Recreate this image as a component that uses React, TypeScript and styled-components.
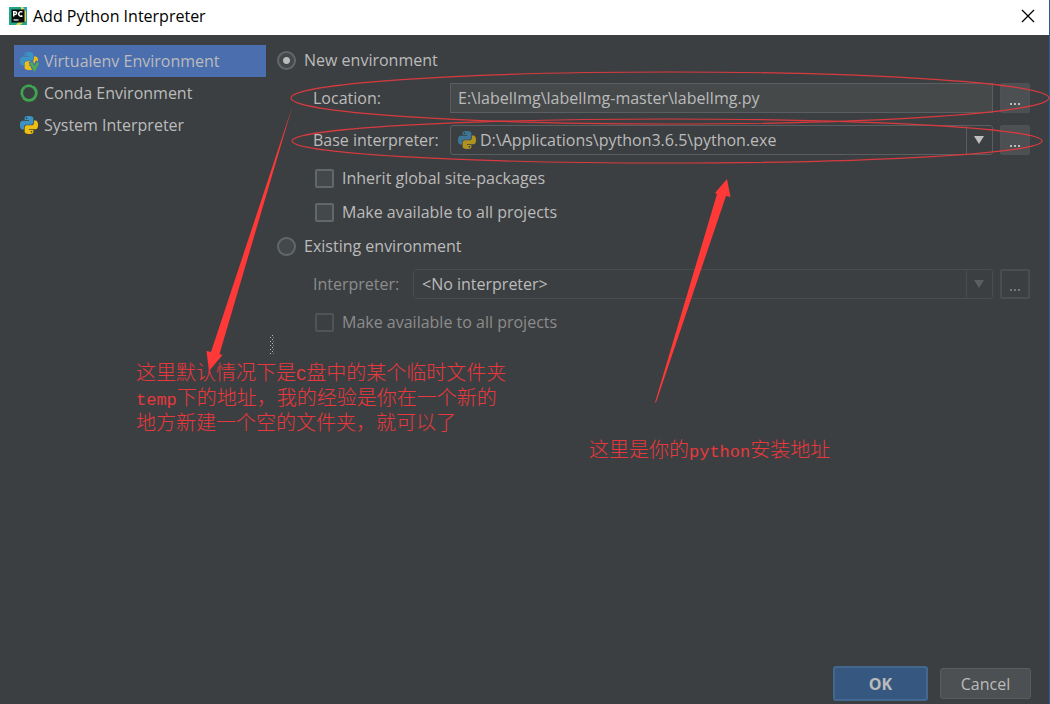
import React from "react";
import styled, { createGlobalStyle } from "styled-components";

const GlobalStyle = createGlobalStyle`
  * { box-sizing: border-box; }
  body { margin: 0; background: #3c3f41; }
`;

const uiFont = `"Open Sans", "Noto Sans", "Noto Sans CJK SC", sans-serif`;

const Dialog = styled.div`
  position: relative;
  display: flex;
  flex-direction: column;
  min-height: 100vh;
  background: #3c3f41;
  border-right: 1px solid #23608f;
  color: #bbbbbb;
  font-family: ${uiFont};
  font-size: 16px;
  line-height: 20px;
`;

const TitleBar = styled.header`
  display: flex;
  align-items: center;
  gap: 6px;
  height: 35px;
  padding: 0 14px 3px 9px;
  background: #ffffff;
  color: #000000;
`;

const Title = styled.h1`
  flex: 1;
  margin: 0;
  font-size: 16px;
  font-weight: 400;
`;

const CloseButton = styled.button`
  display: flex;
  padding: 0;
  border: 0;
  background: none;
  color: #000000;
`;

const Body = styled.div`
  display: flex;
  flex: 1;
`;

const Sidebar = styled.nav`
  width: 266px;
  padding: 10px 0 0 14px;
`;

const EnvLink = styled.a<{ $selected?: boolean }>`
  display: flex;
  align-items: center;
  gap: 6px;
  height: 32px;
  padding: 0 6px;
  background: ${(p) => (p.$selected ? "#4b6eaf" : "transparent")};
  color: #bbbbbb;
  text-decoration: none;
`;

const Splitter = styled.div`
  display: flex;
  align-items: center;
  justify-content: center;
  width: 11px;
  padding-bottom: 12px;
`;

const Main = styled.main`
  display: flex;
  flex: 1;
  flex-direction: column;
  min-width: 0;
  padding: 10px 19px 0 0;
`;

const Group = styled.fieldset`
  display: flex;
  flex-direction: column;
  min-width: 0;
  margin: 0 0 4px;
  padding: 0;
  border: 0;
`;

const Choice = styled.label<{ $inset?: boolean; $disabled?: boolean; $gap?: number }>`
  display: flex;
  align-items: center;
  align-self: flex-start;
  gap: 8px;
  height: 30px;
  margin-top: ${(p) => p.$gap ?? 0}px;
  padding-left: ${(p) => (p.$inset ? 38 : 0)}px;
  color: ${(p) => (p.$disabled ? "#8c8c8c" : "#bbbbbb")};
`;

const Radio = styled.input`
  appearance: none;
  width: 19px;
  height: 19px;
  margin: 0;
  border: 2px solid #63676a;
  border-radius: 50%;
  background: #43484a;
  &:checked {
    background: radial-gradient(circle, #bbbbbb 3px, #43484a 4px);
  }
`;

const Checkbox = styled.input`
  appearance: none;
  width: 19px;
  height: 19px;
  margin: 0;
  border: 2px solid #63676a;
  border-radius: 2px;
  background: #43484a;
  &:disabled {
    border-color: #515456;
    background: #3c3f41;
  }
`;

const FieldRow = styled.div<{ $gap: number }>`
  display: flex;
  align-items: center;
  height: 30px;
  margin-top: ${(p) => p.$gap}px;
  padding-left: 36px;
`;

const FieldLabel = styled.label<{ $width: number; $disabled?: boolean }>`
  width: ${(p) => p.$width}px;
  color: ${(p) => (p.$disabled ? "#8c8c8c" : "#bbbbbb")};
`;

const TextInput = styled.input`
  flex: 1;
  min-width: 0;
  height: 30px;
  padding: 0 7px;
  border: 1px solid #5b5e60;
  background: #45494a;
  color: #bbbbbb;
  font: inherit;
`;

const SelectBox = styled.div<{ $disabled?: boolean }>`
  display: grid;
  flex: 1;
  grid-template-columns: 30px 1fr 26px;
  align-items: center;
  min-width: 0;
  height: 30px;
  border: 1px solid ${(p) => (p.$disabled ? "#4a4d4f" : "#5b5e60")};
  border-radius: 3px;
  & > * { grid-row: 1; }
`;

const Select = styled.select<{ $icon?: boolean }>`
  appearance: none;
  grid-column: 1 / 4;
  height: 28px;
  padding: 0 30px 0 ${(p) => (p.$icon ? 29 : 8)}px;
  border: 0;
  background: transparent;
  color: #bbbbbb;
  font: inherit;
  opacity: 1;
`;

const SelectIcon = styled.span`
  display: flex;
  grid-column: 1;
  padding-left: 7px;
  opacity: 0.65;
  pointer-events: none;
`;

const ArrowCell = styled.span<{ $disabled?: boolean }>`
  display: flex;
  grid-column: 3;
  align-items: center;
  justify-content: center;
  height: 28px;
  padding-right: 2px;
  border-left: 1px solid ${(p) => (p.$disabled ? "#4a4d4f" : "#5b5e60")};
  color: ${(p) => (p.$disabled ? "#5c5f61" : "#bfbfbf")};
  pointer-events: none;
`;

const BrowseButton = styled.button`
  display: flex;
  align-items: flex-end;
  justify-content: center;
  width: 30px;
  height: 30px;
  margin-left: 7px;
  padding: 0 0 3px;
  border: 1px solid #4f5254;
  border-radius: 2px;
  background: #4c5052;
  color: #bbbbbb;
  font: inherit;
  &:disabled {
    border: 2px solid #4a4d4f;
    background: #3c3f41;
    color: #777777;
    padding-bottom: 2px;
  }
`;

const Footer = styled.footer`
  display: flex;
  align-items: center;
  justify-content: flex-end;
  gap: 12px;
  padding: 0 18px 3px;
`;

const FooterButton = styled.button<{ $primary?: boolean }>`
  width: ${(p) => (p.$primary ? 95 : 91)}px;
  height: ${(p) => (p.$primary ? 35 : 31)}px;
  padding: 0;
  border: ${(p) => (p.$primary ? "2px solid #43688f" : "1px solid #5a5d5f")};
  border-radius: 3px;
  background: ${(p) => (p.$primary ? "#365880" : "#4c5052")};
  color: #bbbbbb;
  font: inherit;
  font-weight: ${(p) => (p.$primary ? 700 : 400)};
`;

const Markup = styled.svg`
  position: absolute;
  top: 0;
  left: 0;
  pointer-events: none;
`;

const Note = styled.p<{ $x: number; $y: number }>`
  position: absolute;
  top: ${(p) => p.$y}px;
  left: ${(p) => p.$x}px;
  margin: 0;
  color: #e8383d;
  font-family: "Liberation Mono", "Noto Sans CJK SC", monospace;
  font-size: 20px;
  font-weight: 300;
  line-height: 25px;
  white-space: nowrap;
`;

const Latin = styled.span`
  font-size: 17px;
  line-height: 1;
`;

const SNAKE =
  "M14.25.18l.9.2.73.26.59.3.45.32.34.34.25.34.16.33.1.3.04.26.02.2-.01.13V8.5l-.05.63-.13.55-.21.46-.26.38-.3.31-.33.25-.35.19-.35.14-.33.1-.3.07-.26.04-.21.02H8.77l-.69.05-.59.14-.5.22-.41.27-.33.32-.27.35-.2.36-.15.37-.1.35-.07.32-.04.27-.02.21v3.06H3.17l-.21-.03-.28-.07-.32-.12-.35-.18-.36-.26-.36-.36-.35-.46-.32-.59-.28-.73-.21-.88-.14-1.05-.05-1.23.06-1.22.16-1.04.24-.87.32-.71.36-.57.4-.44.42-.33.42-.24.4-.16.36-.1.32-.05.24-.01h.16l.06.01h8.16v-.83H6.18l-.01-2.75-.02-.37.05-.34.11-.31.17-.28.25-.26.31-.23.38-.2.44-.18.51-.15.58-.12.64-.1.71-.06.77-.04.84-.02 1.27.05zm-6.3 1.98l-.23.33-.08.41.08.41.23.34.33.22.41.09.41-.09.33-.22.23-.34.08-.41-.08-.41-.23-.33-.33-.22-.41-.09-.41.09z";

const PythonIcon = ({ venv }: { venv?: boolean }) => (
  <svg width="18" height="18" viewBox="0 0 24 24" overflow="visible" aria-hidden="true">
    <path d={SNAKE} fill="#3c93c2" />
    <path d={SNAKE} fill="#efbf10" transform="rotate(180 12 12)" />
    {venv && (
      <path d="M14 12.500l5 9.500 5-9.500" fill="none" stroke="#4b6eaf" strokeWidth="6" />
    )}
    {venv && (
      <path d="M14.500 14l5 9 4.500-9" fill="none" stroke="#4dae50" strokeWidth="3.500" />
    )}
  </svg>
);

const CondaIcon = () => (
  <svg width="18" height="18" viewBox="0 0 18 18" aria-hidden="true">
    <circle cx="9" cy="9" r="7.300" fill="none" stroke="#3fa650" strokeWidth="2.800" />
    <path d="M2 14A8.500 8.500 0 0 1 14 2" fill="none" stroke="#3c3f41" strokeWidth="1.600" strokeDasharray="1 1.600" />
    <path d="M5 3.500l1.500 1M3.500 6l1.500.500" stroke="#3c3f41" strokeWidth="0.800" />
  </svg>
);

const PyCharmIcon = () => (
  <svg width="18" height="18" viewBox="0 0 18 18" aria-hidden="true">
    <rect width="18" height="18" fill="#21a98d" />
    <path d="M12 0h3l2 3v11l-6 4H7l5-6z" fill="#d9dd5a" />
    <path d="M0 3l4-3h8L5 18H0z" fill="#24a386" />
    <path d="M14 0h4v6z" fill="#2b9fc4" />
    <rect x="2.500" y="2.500" width="13" height="13" fill="#0b0b0b" />
    <path d="M4.700 9.500V4.700h1.500a1.400 1.400 0 0 1 0 2.800H4.700M13.400 5.300a2.200 2.200 0 1 0 0 3.300" fill="none" stroke="#ffffff" strokeWidth="1.400" />
    <path d="M4.500 13h5" stroke="#ffffff" strokeWidth="1.200" />
  </svg>
);

const DownArrow = () => (
  <svg width="10" height="8" viewBox="0 0 10 8" aria-hidden="true">
    <path d="M0 0h10L5 8z" fill="currentColor" />
  </svg>
);

const Grip = () => (
  <svg width="6" height="20" viewBox="0 0 6 20" aria-hidden="true">
    {[0, 4, 8, 12, 16].map((y) => (
      <g key={y} fill="#b5b5b5">
        <rect x="3" y={y} width="1" height="1" />
        <rect x="1" y={y + 2} width="1" height="1" />
        <rect x="4" y={y + 2} width="1" height="1" fill="#77797a" />
      </g>
    ))}
  </svg>
);

const Ellipsis = () => (
  <svg width="12" height="8" viewBox="0 0 12 8" aria-hidden="true">
    <path d="M1 2h2v2H1zM5 2h2v2H5zM9 2h2v2H9z" fill="currentColor" />
  </svg>
);

export default function App() {
  return (
    <Dialog role="dialog" aria-labelledby="dialog-title">
      <GlobalStyle />
      <TitleBar>
        <PyCharmIcon />
        <Title id="dialog-title">Add Python Interpreter</Title>
        <CloseButton aria-label="Close">
          <svg width="14" height="14" viewBox="0 0 14 14" aria-hidden="true">
            <path d="M1 1l12 12M13 1L1 13" stroke="currentColor" strokeWidth="1.300" />
          </svg>
        </CloseButton>
      </TitleBar>

      <Body>
        <Sidebar>
          <EnvLink href="#virtualenv" $selected>
            <PythonIcon venv />
            Virtualenv Environment
          </EnvLink>
          <EnvLink href="#conda">
            <CondaIcon />
            Conda Environment
          </EnvLink>
          <EnvLink href="#system">
            <PythonIcon />
            System Interpreter
          </EnvLink>
        </Sidebar>

        <Splitter>
          <Grip />
        </Splitter>

        <Main>
          <Group>
            <Choice>
              <Radio type="radio" name="mode" defaultChecked />
              New environment
            </Choice>
            <FieldRow $gap={8}>
              <FieldLabel $width={137} htmlFor="location">Location:</FieldLabel>
              <TextInput id="location" defaultValue="E:\labelImg\labelImg-master\labelImg.py" />
              <BrowseButton aria-label="Browse location"><Ellipsis /></BrowseButton>
            </FieldRow>
            <FieldRow $gap={12}>
              <FieldLabel $width={137} htmlFor="base">Base interpreter:</FieldLabel>
              <SelectBox>
                <Select id="base" $icon>
                  <option>D:\Applications\python3.6.5\python.exe</option>
                </Select>
                <SelectIcon><PythonIcon /></SelectIcon>
                <ArrowCell><DownArrow /></ArrowCell>
              </SelectBox>
              <BrowseButton aria-label="Browse base interpreter"><Ellipsis /></BrowseButton>
            </FieldRow>
            <Choice $inset $gap={8}>
              <Checkbox type="checkbox" />
              Inherit global site-packages
            </Choice>
            <Choice $inset $gap={4}>
              <Checkbox type="checkbox" />
              Make available to all projects
            </Choice>
          </Group>
          <Group>
            <Choice>
              <Radio type="radio" name="mode" />
              Existing environment
            </Choice>
            <FieldRow $gap={8}>
              <FieldLabel $width={100} $disabled htmlFor="existing">Interpreter:</FieldLabel>
              <SelectBox $disabled>
                <Select id="existing" disabled>
                  <option>&lt;No interpreter&gt;</option>
                </Select>
                <ArrowCell $disabled><DownArrow /></ArrowCell>
              </SelectBox>
              <BrowseButton disabled aria-label="Browse interpreter"><Ellipsis /></BrowseButton>
            </FieldRow>
            <Choice $inset $disabled $gap={8}>
              <Checkbox type="checkbox" disabled />
              Make available to all projects
            </Choice>
          </Group>
        </Main>
      </Body>

      <Footer>
        <FooterButton $primary>OK</FooterButton>
        <FooterButton>Cancel</FooterButton>
      </Footer>

      <Markup width="1050" height="480" viewBox="0 0 1050 480" aria-hidden="true">
        <g fill="none" stroke="#d93a3f" strokeWidth="1.200">
          <ellipse cx="670" cy="98" rx="379" ry="26" />
          <ellipse cx="667" cy="141" rx="375" ry="22" />
        </g>
        <g fill="#ff3838">
          <path d="M292.500 106L219.500 354L222.500 355L209 371L206.500 351L211 352Z" />
          <path d="M655 402.500L717 194L715 193L727 179L730.500 197L726 196L656 402.500Z" />
        </g>
      </Markup>
      <Note $x={136} $y={362}>
        这里默认情况下是<Latin>C</Latin>盘中的某个临时文件夹
        <br />
        <Latin>temp</Latin>下的地址，我的经验是你在一个新的
        <br />
        地方新建一个空的文件夹，就可以了
      </Note>
      <Note $x={589} $y={439}>
        这里是你的<Latin>python</Latin>安装地址
      </Note>
    </Dialog>
  );
}
